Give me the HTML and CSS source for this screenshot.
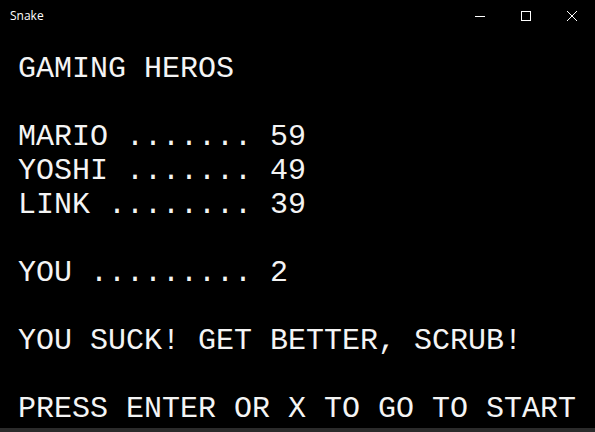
FILE: index.html
```html
<!DOCTYPE html>
<html>
<head>
<meta charset="utf-8">
<title>Snake</title>
<link rel="stylesheet" href="styles.css">
</head>
<body>
<div class="window">
  <div class="titlebar">
    <span class="title">Snake</span>
    <div class="controls">
      <div class="btn">
        <svg width="10" height="10" viewBox="0 0 10 10"><path d="M0 5.5H10" stroke="#fff" stroke-width="1"/></svg>
      </div>
      <div class="btn">
        <svg width="10" height="10" viewBox="0 0 10 10"><rect x="0.5" y="0.5" width="9" height="9" fill="none" stroke="#fff" stroke-width="1"/></svg>
      </div>
      <div class="btn">
        <svg width="10" height="10" viewBox="0 0 10 10"><path d="M0 0L10 10M10 0L0 10" stroke="#fff" stroke-width="1"/></svg>
      </div>
    </div>
  </div>
  <div class="screen">
    <div class="line">GAMING HEROS</div>
    <div class="line"></div>
    <div class="line">MARIO ....... 59</div>
    <div class="line">YOSHI ....... 49</div>
    <div class="line">LINK ........ 39</div>
    <div class="line"></div>
    <div class="line">YOU ......... 2</div>
    <div class="line"></div>
    <div class="line">YOU SUCK! GET BETTER, SCRUB!</div>
    <div class="line"></div>
    <div class="line">PRESS ENTER OR X TO GO TO START</div>
  </div>
  <div class="frame-bottom"></div>
</div>
</body>
</html>
```
FILE: styles.css
```css
html, body {
  margin: 0;
  padding: 0;
  background: #000;
}
.window {
  width: 595px;
  height: 432px;
  display: flex;
  flex-direction: column;
  background: #000;
  overflow: hidden;
}
.titlebar {
  height: 31px;
  display: flex;
  align-items: center;
  justify-content: space-between;
  flex: none;
}
.title {
  font-family: "Open Sans", "Noto Sans", sans-serif;
  font-size: 12px;
  color: #fff;
  padding-left: 10px;
  padding-bottom: 1px;
}
.controls {
  display: flex;
  height: 31px;
}
.btn {
  width: 46px;
  height: 31px;
  display: flex;
  align-items: center;
  justify-content: center;
}
.btn svg {
  display: block;
}
.screen {
  flex: 1;
  padding: 21px 0 0 18px;
  font-family: "Courier New", "Nimbus Mono PS", "FreeMono", "Liberation Mono", monospace;
  font-size: 30px;
  line-height: 34px;
  color: #f4f4f4;
}
.line {
  height: 34px;
  white-space: pre;
}
.frame-bottom {
  height: 4px;
  background: #2b2b2b;
  flex: none;
}
```
